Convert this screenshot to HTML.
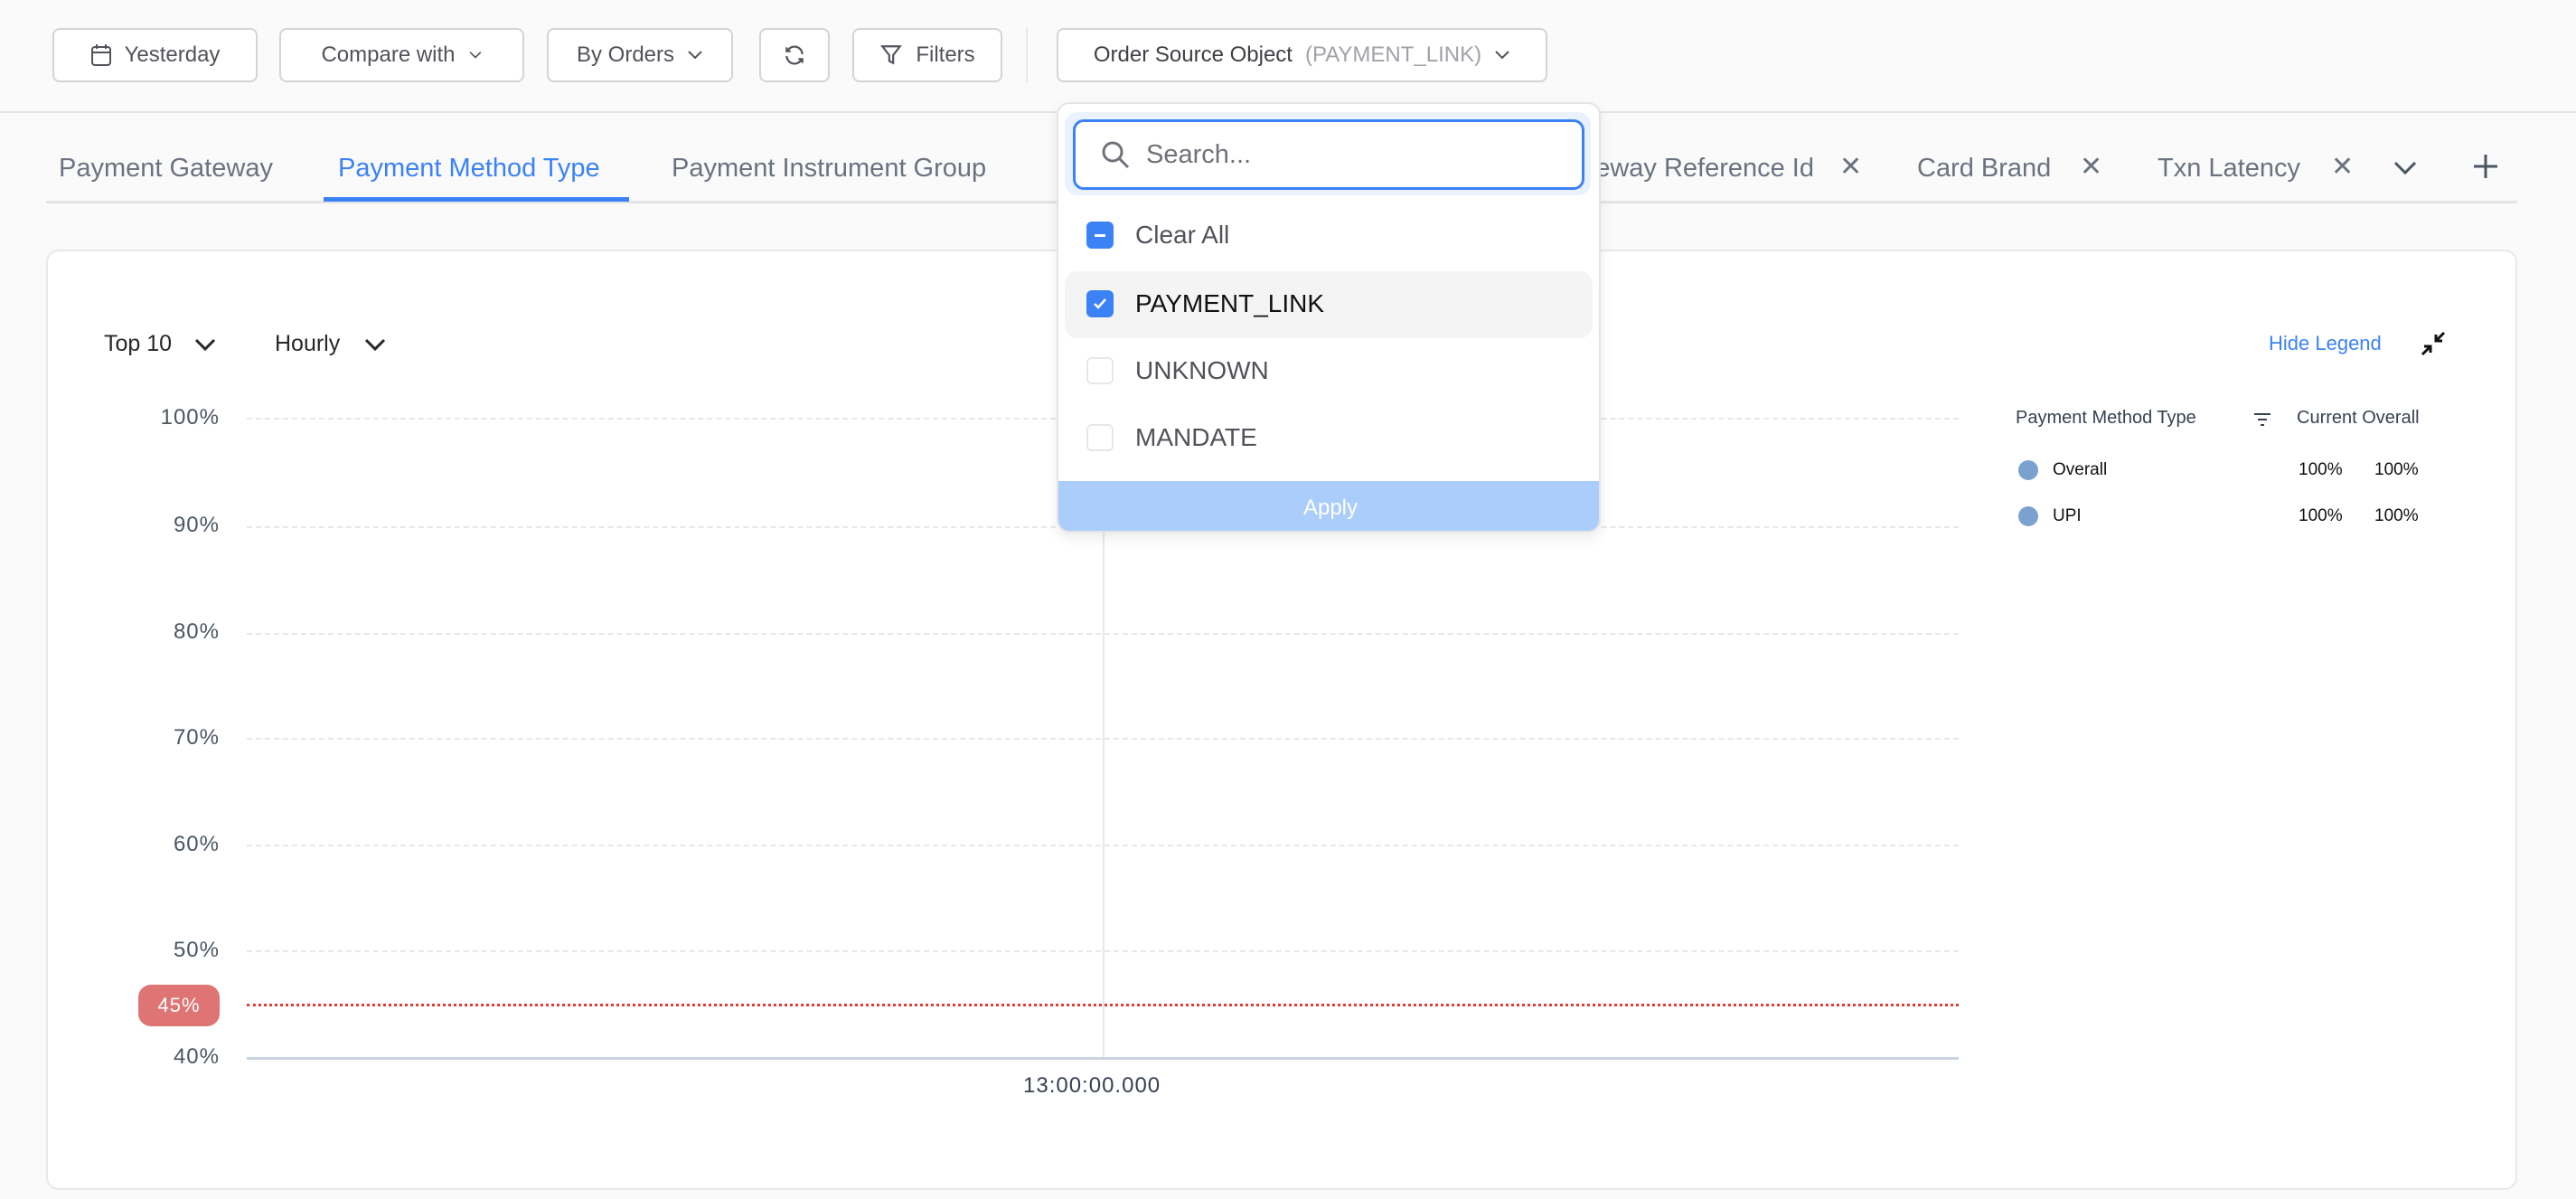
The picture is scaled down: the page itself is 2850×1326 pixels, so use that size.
<!DOCTYPE html>
<html><head><meta charset="utf-8"><style>
*{box-sizing:border-box;margin:0;padding:0}
body{width:2850px;height:1326px;background:#fafafa;font-family:"Liberation Sans",sans-serif;position:relative;overflow:hidden;color:#4b5563}
.a{position:absolute}
.btn{position:absolute;top:31px;height:60px;border:2px solid #d4d4d8;border-radius:8px;background:#fff;display:flex;align-items:center;justify-content:center;font-size:24px;color:#52525b;gap:14px;font-weight:500}
.tab{position:absolute;top:170px;font-size:29px;color:#6b7280;white-space:nowrap}
.x{position:absolute;top:167px;font-size:30px;color:#6b7280}
.yl{position:absolute;right:2607px;font-size:24px;color:#4b5563;letter-spacing:1px}
.grid{position:absolute;left:273px;width:1894px;border-top:2px dashed #e5e7eb}
.item{position:absolute;left:1202px;font-size:28px;color:#52525b;display:flex;align-items:center;gap:24px}
.cb{width:30px;height:30px;border-radius:6px;border:2px solid #e5e7eb;background:#fff;display:flex;align-items:center;justify-content:center}
.cb.on{background:#3b82f6;border-color:#3b82f6}
.lg{position:absolute;font-size:20px;color:#374151}
</style></head><body>
<div class="btn" style="left:58px;width:227px"><svg width="24" height="26" viewBox="0 0 24 26" fill="none" stroke="#52525b" stroke-width="2"><rect x="2" y="4" width="20" height="20" rx="3"/><path d="M2 10h20M7 1v5M17 1v5"/></svg>Yesterday</div>
<div class="btn" style="left:309px;width:271px">Compare with <svg width="16" height="10" viewBox="0 0 18 12" fill="none" stroke="#52525b" stroke-width="2"><path d="M2 2l7 7 7-7"/></svg></div>
<div class="btn" style="left:605px;width:206px">By Orders <svg width="18" height="12" viewBox="0 0 18 12" fill="none" stroke="#52525b" stroke-width="2"><path d="M2 2l7 7 7-7"/></svg></div>
<div class="btn" style="left:840px;width:78px"><svg width="26" height="26" viewBox="0 0 24 24" fill="none" stroke="#52525b" stroke-width="2"><path d="M20 11a8 8 0 0 0-14-5l-2 2M4 4v4h4M4 13a8 8 0 0 0 14 5l2-2M20 20v-4h-4"/></svg></div>
<div class="btn" style="left:943px;width:166px"><svg width="26" height="26" viewBox="0 0 24 24" fill="none" stroke="#52525b" stroke-width="2"><path d="M3 3h18l-7 9v8l-4-2v-6z"/></svg>Filters</div>
<div class="a" style="left:1135px;top:31px;width:2px;height:60px;background:#e5e7eb"></div>
<div class="btn" style="left:1169px;width:543px"><span style="color:#3f3f46">Order Source Object</span><span style="color:#a1a1aa;font-weight:400">(PAYMENT_LINK)</span><svg width="18" height="12" viewBox="0 0 18 12" fill="none" stroke="#52525b" stroke-width="2"><path d="M2 2l7 7 7-7"/></svg></div>
<div class="a" style="left:0;top:123px;width:2850px;height:2px;background:#e4e4e7"></div>

<div class="tab" style="left:65px">Payment Gateway</div>
<div class="tab" style="left:374px;color:#3b82f6">Payment Method Type</div>
<div class="tab" style="left:743px">Payment Instrument Group</div>
<div class="tab" style="right:843px">Payment Gateway Reference Id</div>
<div class="x" style="left:2035px">✕</div>
<div class="tab" style="left:2121px">Card Brand</div>
<div class="x" style="left:2301px">✕</div>
<div class="tab" style="left:2387px">Txn Latency</div>
<div class="x" style="left:2579px">✕</div>
<svg class="a" style="left:2648px;top:178px" width="26" height="16" viewBox="0 0 26 16" fill="none" stroke="#4b5563" stroke-width="3"><path d="M2 2l11 11 11-11"/></svg>
<svg class="a" style="left:2736px;top:170px" width="28" height="28" viewBox="0 0 28 28" stroke="#4b5563" stroke-width="3"><path d="M14 1v26M1 14h26"/></svg>
<div class="a" style="left:51px;top:222px;width:2734px;height:3px;background:#e4e4e7"></div>
<div class="a" style="left:358px;top:218px;width:338px;height:5px;background:#3b82f6"></div>

<div class="a" style="left:51px;top:276px;width:2734px;height:1040px;background:#fff;border:2px solid #e8e8ec;border-radius:14px"></div>
<div class="a" style="left:115px;top:366px;font-size:25px;color:#27272a">Top 10</div>
<svg class="a" style="left:215px;top:374px" width="24" height="15" viewBox="0 0 24 15" fill="none" stroke="#27272a" stroke-width="3"><path d="M2 2l10 10 10-10"/></svg>
<div class="a" style="left:304px;top:366px;font-size:25px;color:#27272a">Hourly</div>
<svg class="a" style="left:403px;top:374px" width="24" height="15" viewBox="0 0 24 15" fill="none" stroke="#27272a" stroke-width="3"><path d="M2 2l10 10 10-10"/></svg>
<div class="a" style="left:2510px;top:367px;font-size:22px;color:#3b82f6">Hide Legend</div>
<svg class="a" style="left:2678px;top:366px" width="28" height="28" viewBox="0 0 28 28" fill="none" stroke="#111" stroke-width="3"><path d="M26 2l-9 9M17 4v7h7M2 26l9-9M4 17h7v7"/></svg>

<div class="yl" style="top:448px">100%</div><div class="grid" style="top:462px"></div>
<div class="yl" style="top:567px">90%</div><div class="grid" style="top:582px"></div>
<div class="yl" style="top:685px">80%</div><div class="grid" style="top:700px"></div>
<div class="yl" style="top:802px">70%</div><div class="grid" style="top:816px"></div>
<div class="yl" style="top:920px">60%</div><div class="grid" style="top:934px"></div>
<div class="yl" style="top:1037px">50%</div><div class="grid" style="top:1051px"></div>
<div class="yl" style="top:1155px">40%</div>
<div class="a" style="left:273px;top:1169px;width:1894px;height:3px;background:#cbd5e1"></div>
<div class="a" style="left:1220px;top:560px;width:2px;height:609px;background:#e5e7eb"></div>
<div class="a" style="left:273px;top:1110px;width:1894px;border-top:3px dotted #e53935"></div>
<div class="a" style="left:153px;top:1089px;width:90px;height:46px;border-radius:14px;background:#df7474;color:#fff;font-size:22px;display:flex;align-items:center;justify-content:center;letter-spacing:1px">45%</div>
<div class="a" style="left:1132px;top:1187px;font-size:24px;color:#374151;letter-spacing:1px">13:00:00.000</div>

<div class="lg" style="left:2230px;top:451px">Payment Method Type</div>
<svg class="a" style="left:2493px;top:456px" width="20" height="16" viewBox="0 0 20 16" stroke="#374151" stroke-width="2"><path d="M1 2h18M5 8h10M8 14h4"/></svg>
<div class="lg" style="left:2541px;top:451px">Current Overall</div>
<div class="a" style="left:2233px;top:509px;width:22px;height:22px;border-radius:50%;background:#7ba1cf"></div>
<div class="lg" style="left:2271px;top:509px;font-size:19px;color:#111">Overall</div>
<div class="lg" style="left:2543px;top:509px;font-size:19px;color:#111">100%</div>
<div class="lg" style="left:2627px;top:509px;font-size:19px;color:#111">100%</div>
<div class="a" style="left:2233px;top:560px;width:22px;height:22px;border-radius:50%;background:#7ba1cf"></div>
<div class="lg" style="left:2271px;top:560px;font-size:19px;color:#111">UPI</div>
<div class="lg" style="left:2543px;top:560px;font-size:19px;color:#111">100%</div>
<div class="lg" style="left:2627px;top:560px;font-size:19px;color:#111">100%</div>

<div class="a" style="left:1169px;top:113px;width:602px;height:476px;background:#fff;border:2px solid #e4e4e7;border-radius:14px;box-shadow:0 6px 14px rgba(0,0,0,.08);overflow:hidden">
 <div class="a" style="left:7px;top:9px;width:582px;height:92px;background:#eaf2fd;border-radius:14px"></div>
 <div class="a" style="left:16px;top:17px;width:566px;height:78px;border:3px solid #3b82f6;border-radius:12px;background:#fff;display:flex;align-items:center;padding-left:28px;gap:18px;font-size:29px;color:#71717a">
  <svg width="32" height="32" viewBox="0 0 32 32" fill="none" stroke="#71717a" stroke-width="3"><circle cx="13" cy="13" r="10"/><path d="M21 21l9 9"/></svg>Search...</div>
 <div class="a" style="left:7px;top:185px;width:584px;height:74px;background:#f4f4f5;border-radius:14px"></div>
 <div class="a" style="left:0;top:417px;width:602px;height:59px;background:#abcdfb;color:#fff;font-size:24px;display:flex;align-items:center;justify-content:center">Apply</div>
</div>
<div class="item" style="top:244px"><div class="cb on"><div style="width:12px;height:3px;background:#fff"></div></div>Clear All</div>
<div class="item" style="top:320px;color:#111"><div class="cb on"><svg width="16" height="14" viewBox="0 0 16 14" fill="none" stroke="#fff" stroke-width="2.5"><path d="M2 7l4 4 8-9"/></svg></div>PAYMENT_LINK</div>
<div class="item" style="top:394px"><div class="cb"></div>UNKNOWN</div>
<div class="item" style="top:468px"><div class="cb"></div>MANDATE</div>
</body></html>
